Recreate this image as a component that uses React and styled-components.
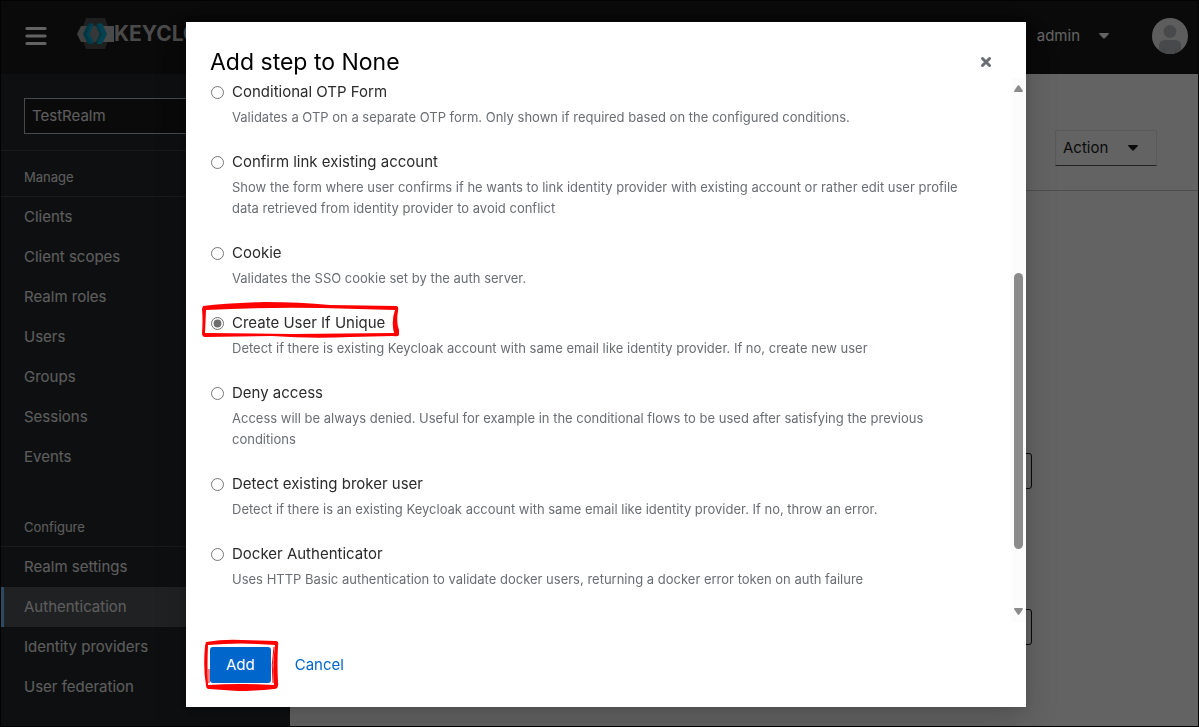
import React, { useState } from "react";
import styled, { createGlobalStyle } from "styled-components";

const GlobalStyle = createGlobalStyle`
  *, *::before, *::after { box-sizing: border-box; }
  body { margin: 0; font-family: Inter, "Open Sans", sans-serif; font-size: 15px; line-height: 24px; color: #151515; }
  h1, h2, p, ul { margin: 0; padding: 0; font-weight: 400; }
  ul { list-style: none; }
  button, input { font: inherit; color: inherit; }
`;

const Page = styled.div`
  min-height: 100vh;
  display: flex;
  flex-direction: column;
  border: 1px solid #000;
`;

const Masthead = styled.header`
  height: 73px;
  flex: none;
  display: flex;
  align-items: center;
  padding: 0 10px 4px 24px;
  background: #151515;
  color: #fff;
`;

const PlainButton = styled.button`
  display: flex;
  align-items: center;
  gap: ${(p) => p.$gap || 0}px;
  padding: 0;
  border: 0;
  background: none;
`;

const Brand = styled.a`
  display: flex;
  align-items: center;
  margin: 0 auto 3px 30px;
  color: #bdbdbd;
  font-size: 21px;
  font-weight: 700;
  text-decoration: none;
`;

const Avatar = styled.svg`
  margin-left: 43px;
`;

const Body = styled.div`
  flex: 1;
  display: flex;
`;

const Sidebar = styled.nav`
  width: 289px;
  flex: none;
  background: #212427;
  color: #f0f0f0;
`;

const RealmBlock = styled.div`
  padding: 24px 24px 16px 23px;
  border-bottom: 1px solid #3c3f42;
`;

const RealmSelect = styled.button`
  display: flex;
  width: 100%;
  height: 36px;
  align-items: center;
  justify-content: space-between;
  padding: 0 8px 0 7px;
  border: 1px solid #b8bbbe;
  background: #151515;
`;

const NavSection = styled.section`
  & + & { margin-top: 24px; }
`;

const NavTitle = styled.h2`
  padding: 16px 23px 9px;
  border-bottom: 1px solid #3c3f42;
  font-size: 13px;
  line-height: 20px;
`;

const NavLink = styled.a`
  display: block;
  padding: 8px 20px;
  border-left: 3px solid ${(p) => (p.$active ? "#73bcf7" : "transparent")};
  background: ${(p) => (p.$active ? "#4f5255" : "none")};
  color: inherit;
  text-decoration: none;
`;

const Main = styled.main`
  flex: 1;
  background: #fff;
`;

const Toolbar = styled.div`
  display: flex;
  justify-content: flex-end;
  padding: 56px 41px 24px;
  border-bottom: 1px solid #c8c8c8;
`;

const ActionButton = styled.button`
  display: flex;
  width: 102px;
  height: 36px;
  align-items: center;
  justify-content: space-between;
  padding: 0 18px 0 7px;
  border: 1px solid #e8e8e8;
  border-bottom-color: #55585c;
  background: none;
`;

const Fields = styled.form`
  display: grid;
  gap: 120px;
  padding: 262px 166px 80px 24px;
`;

const Field = styled.input`
  width: 100%;
  height: 36px;
  padding: 0 8px;
  border: 1px solid #151515;
  border-radius: 3px;
  background: none;
`;

const Backdrop = styled.div`
  position: fixed;
  inset: 0;
  display: flex;
  align-items: flex-start;
  justify-content: center;
  padding: 22px 0 20px 13px;
  background: rgba(3, 3, 3, 0.62);
`;

const Modal = styled.div`
  width: min(840px, 100%);
  padding: 24px 0 24px 24px;
  background: #fff;
  box-shadow: 0 16px 32px rgba(3, 3, 3, 0.16), 0 0 8px rgba(3, 3, 3, 0.1);
`;

const ModalHeader = styled.header`
  display: flex;
  align-items: center;
  justify-content: space-between;
  padding-right: 34px;
`;

const ModalTitle = styled.h1`
  font-size: 23px;
  line-height: 32px;
  color: #000;
`;

const ModalBody = styled.div`
  display: flex;
`;

const StepList = styled.ul`
  flex: 1;
  display: grid;
  gap: 22px;
  align-content: start;
  padding: 2px 32px 32px 1px;
`;

const Step = styled.li`
  display: grid;
  grid-template-columns: 13px 1fr;
  column-gap: 8px;
  row-gap: 3px;
`;

const Radio = styled.input`
  width: 13px;
  height: 13px;
  margin: 6px 0 0;
  accent-color: #6f6f6f;
`;

const StepLabel = styled.label`
  color: #2b2b2b;
`;

const StepText = styled.p`
  grid-column: 2;
  font-size: 13px;
  line-height: 21px;
  color: #6a6e73;
`;

const Scrollbar = styled.div`
  width: 15px;
  display: flex;
  flex-direction: column;
  align-items: center;
  padding: 7px 0;
  background: #fcfcfc;
`;

const Thumb = styled.div`
  width: 9px;
  height: 276px;
  border-radius: 5px;
  background: #8b8b8b;
`;

const TrackSpace = styled.div`
  flex: ${(p) => p.$share};
`;

const ModalFooter = styled.footer`
  display: flex;
  gap: 8px;
  padding-top: 25px;
`;

const FooterButton = styled.button`
  height: 36px;
  padding: 0 16px;
  border: 0;
  border-radius: 3px;
  background: ${(p) => (p.$primary ? "#06c" : "none")};
  color: ${(p) => (p.$primary ? "#fff" : "#06c")};
`;

const Marked = styled.span`
  position: relative;
  display: inline-flex;
`;

const Mark = styled.svg`
  position: absolute;
  left: ${(p) => p.$left}px;
  top: ${(p) => p.$top}px;
  pointer-events: none;
  overflow: visible;
`;

const Caret = () => (
  <svg width="10" height="6" viewBox="0 0 10 6" aria-hidden="true">
    <path d="M0.8 0h8.4q1.2.4.4 1.3L5.8 5.3q-.8.7-1.6 0L.4 1.3Q-.4.4.8 0Z" fill="currentColor" />
  </svg>
);

const ScrollArrow = ({ down }) => (
  <svg width="9" height="7" viewBox="0 0 9 7" aria-hidden="true">
    <path
      d={down ? "M.8 0h7.4q1 .3.6 1.2L5.3 6.4q-.8.8-1.6 0L.2 1.2Q-.2.3.8 0Z" : "M.8 7h7.4q1-.3.6-1.2L5.3.6q-.8-.8-1.6 0L.2 5.8Q-.2 6.7.8 7Z"}
      fill="#8b8b8b"
    />
  </svg>
);

const Logo = () => (
  <svg width="37" height="32" viewBox="0 0 37 32" aria-hidden="true">
    <path d="M9 0h19l5.500 15.500L28 31H9L3.500 15.500Z" fill="#4d4d4d" />
    <path d="M4 8h33v16H4L0 16Z" fill="#a2a2a2" />
    <path d="M25 8h12v16H25l5-8Z" fill="#bdbdbd" />
    <path d="M15 8h7l4 8-4 8h-7l-4-8Z" fill="#8c8c8c" />
    <path d="M11 5.500h5L11.500 16 16 26h-5L6 16Z" fill="#008aaa" />
    <path d="M14.500 5.500h1.500l.5 2L12.500 16l4 7-.5 3h-1.500L9.500 16Z" fill="#00a5cc" />
    <path d="M20 5.500h5L30 16l-5 10h-5l5-10Z" fill="#00a5cc" />
    <path d="M20 5.500L25 16l-5 10-1-2.500L22.500 16 19 8Z" fill="#008aaa" />
  </svg>
);

const STEPS = [
  ["Conditional OTP Form", "Validates a OTP on a separate OTP form. Only shown if required based on the configured conditions."],
  ["Confirm link existing account", "Show the form where user confirms if he wants to link identity provider with existing account or rather edit user profile data retrieved from identity provider to avoid conflict"],
  ["Cookie", "Validates the SSO cookie set by the auth server."],
  ["Create User If Unique", "Detect if there is existing Keycloak account with same email like identity provider. If no, create new user"],
  ["Deny access", "Access will be always denied. Useful for example in the conditional flows to be used after satisfying the previous conditions"],
  ["Detect existing broker user", "Detect if there is an existing Keycloak account with same email like identity provider. If no, throw an error."],
  ["Docker Authenticator", "Uses HTTP Basic authentication to validate docker users, returning a docker error token on auth failure"],
];

const NAV = [
  ["Manage", ["Clients", "Client scopes", "Realm roles", "Users", "Groups", "Sessions", "Events"]],
  ["Configure", ["Realm settings", "Authentication", "Identity providers", "User federation"]],
];

const StepMark = () => (
  <Mark $left={-30} $top={-9} width="197" height="36" viewBox="0 0 197 36" aria-hidden="true">
    <path
      fill="#f00"
      fillRule="evenodd"
      d="M1 4Q24 1 62 0Q98 0 128 3L194 4Q197 4 196 9Q194 20 197 28V33Q196 35 191 34L148 35Q110 37 70 34L3 35Q0 35 0 31Q1 18 0 7ZM4 8L3 31 90 32 192 31Q189 19 193 8L120 6Q60 5 4 8Z"
    />
  </Mark>
);

const AddMark = () => (
  <Mark $left={-6} $top={-8} width="75" height="53" viewBox="0 0 75 53" aria-hidden="true">
    <path
      fill="#f00"
      fillRule="evenodd"
      d="M2 3Q20 0 38 1L72 2Q75 2 74 7Q73 25 74 43Q75 50 70 50Q50 52 34 52L5 50Q2 50 2 46Q-1 30 1 7ZM4 6Q3 26 4 46Q35 44 70 46Q68 28 71 6Q36 3 4 6Z"
    />
    <path d="M70 8Q67 26 69 44M5 30V44M28 46.500Q40 45 50 46.500" fill="none" stroke="#f00" strokeWidth="1" />
  </Mark>
);

export default function App() {
  const [selected, setSelected] = useState("Create User If Unique");
  return (
    <>
      <GlobalStyle />
      <Page>
        <Masthead>
          <PlainButton type="button" aria-label="Toggle navigation">
            <svg width="22" height="20" viewBox="0 0 22 20" aria-hidden="true">
              <path d="M2 2.500h18M2 10h18M2 17.500h18" stroke="#fff" strokeWidth="3.200" strokeLinecap="round" />
            </svg>
          </PlainButton>
          <Brand href="#home">
            <Logo />
            KEYCLOAK
          </Brand>
          <PlainButton type="button" $gap={19}>
            admin
            <Caret />
          </PlainButton>
          <Avatar width="36" height="36" viewBox="0 0 36 36" role="img" aria-label="User avatar">
            <circle cx="18" cy="18" r="18" fill="#f0f0f0" />
            <circle cx="18" cy="13.500" r="6.500" fill="#b8bbbe" />
            <path d="M7 32V28Q7 22 13 22H23Q29 22 29 28V32Q24 36 18 36T7 32Z" fill="#b8bbbe" />
            <path d="M12 35V30M24 35V30" stroke="#a4a7aa" strokeWidth="1" />
          </Avatar>
        </Masthead>
        <Body>
          <Sidebar>
            <RealmBlock>
              <RealmSelect type="button" aria-haspopup="listbox">
                TestRealm
                <Caret />
              </RealmSelect>
            </RealmBlock>
            {NAV.map(([title, links]) => (
              <NavSection key={title}>
                <NavTitle>{title}</NavTitle>
                {links.map((text) => (
                  <NavLink key={text} href="#nav" $active={text === "Authentication"}>
                    {text}
                  </NavLink>
                ))}
              </NavSection>
            ))}
          </Sidebar>
          <Main>
            <Toolbar>
              <ActionButton type="button">
                Action
                <Caret />
              </ActionButton>
            </Toolbar>
            <Fields>
              <Field type="text" aria-label="Execution requirement" />
              <Field type="text" aria-label="Step requirement" />
            </Fields>
          </Main>
        </Body>
      </Page>
      <Backdrop>
        <Modal role="dialog" aria-modal="true" aria-labelledby="dialog-title">
          <ModalHeader>
            <ModalTitle id="dialog-title">Add step to None</ModalTitle>
            <PlainButton type="button" aria-label="Close">
              <svg width="12" height="12" viewBox="0 0 12 12" aria-hidden="true">
                <path d="M2.500 2.500l7 7M9.500 2.500l-7 7" stroke="#6a6e73" strokeWidth="3" strokeLinecap="round" />
              </svg>
            </PlainButton>
          </ModalHeader>
          <ModalBody>
            <StepList>
              {STEPS.map(([name, text], i) => (
                <Step key={name}>
                  <Radio
                    type="radio"
                    name="step"
                    id={`step-${i}`}
                    checked={selected === name}
                    onChange={() => setSelected(name)}
                  />
                  <div>
                    <Marked>
                      <StepLabel htmlFor={`step-${i}`}>{name}</StepLabel>
                      {name === "Create User If Unique" && <StepMark />}
                    </Marked>
                  </div>
                  <StepText>{text}</StepText>
                </Step>
              ))}
            </StepList>
            <Scrollbar aria-hidden="true">
              <ScrollArrow />
              <TrackSpace $share={181} />
              <Thumb />
              <TrackSpace $share={59} />
              <ScrollArrow down />
            </Scrollbar>
          </ModalBody>
          <ModalFooter>
            <Marked>
              <FooterButton type="button" $primary>
                Add
              </FooterButton>
              <AddMark />
            </Marked>
            <FooterButton type="button">Cancel</FooterButton>
          </ModalFooter>
        </Modal>
      </Backdrop>
    </>
  );
}
